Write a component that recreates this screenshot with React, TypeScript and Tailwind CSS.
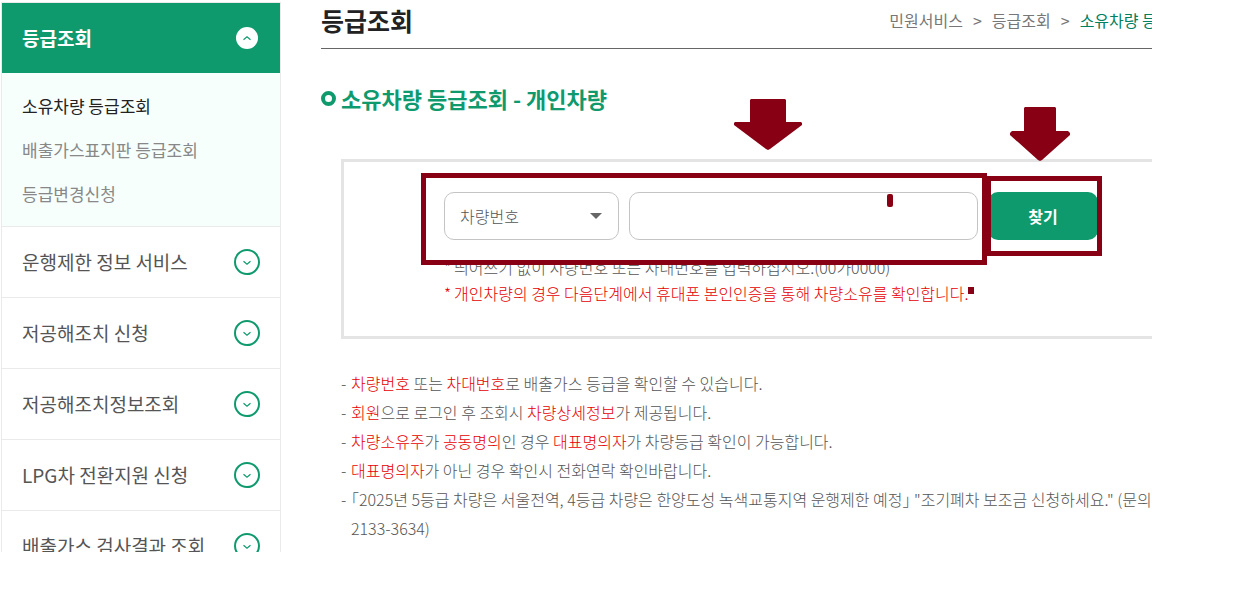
import type { ReactNode } from "react";

const subItems = ["소유차량 등급조회", "배출가스표지판 등급조회", "등급변경신청"];

const menuItems = [
  "운행제한 정보 서비스",
  "저공해조치 신청",
  "저공해조치정보조회",
  "LPG차 전환지원 신청",
  "배출가스 검사결과 조회",
];

function Chevron({ up = false }: { up?: boolean }) {
  return (
    <svg className="size-[26px] shrink-0" viewBox="0 0 26 26" fill="none" aria-hidden="true">
      {up ? (
        <>
          <circle cx="13" cy="13" r="11" fill="#fff" />
          <path d="M9.5 14.7 13 11.7l3.5 3" stroke="#0f9a6e" strokeWidth="1.2" />
        </>
      ) : (
        <>
          <circle cx="13" cy="13" r="12" stroke="#0f9a6e" strokeWidth="2" />
          <path d="M9.5 12.2 13 15.2l3.5-3" stroke="#0f9a6e" strokeWidth="1.2" />
        </>
      )}
    </svg>
  );
}

function Sidebar() {
  return (
    <nav className="w-[280px] shrink-0 border-x border-t border-[#eaeaea]">
      <button className="flex h-[70px] w-full items-center justify-between bg-[#0f9a6e] px-5 text-[19px] font-bold text-white">
        등급조회
        <Chevron up />
      </button>
      <ul className="bg-[#f6fffc] pt-[11px] pb-[10px] pl-5 text-[17px] leading-[44px] text-[#888]">
        {subItems.map((item, i) => (
          <li key={item}>
            <a href="#" className={i === 0 ? "text-[#222]" : ""}>
              {item}
            </a>
          </li>
        ))}
      </ul>
      {menuItems.map((item) => (
        <button
          key={item}
          className="flex h-[71px] w-full items-center justify-between border-t border-[#eaeaea] px-5 text-[19px] text-[#555]"
        >
          {item}
          <Chevron />
        </button>
      ))}
    </nav>
  );
}

function Red({ children }: { children: ReactNode }) {
  return <span className="text-[#e60000]">{children}</span>;
}

function Note({ children }: { children: ReactNode }) {
  return (
    <li className="flex">
      <span className="w-[10px] shrink-0">-</span>
      <span>{children}</span>
    </li>
  );
}

function Annotations() {
  return (
    <div className="pointer-events-none" aria-hidden="true">
      <div className="absolute -top-[16px] left-[542px] h-[80px] w-[116px] border-5 border-[#870014]" />
      <div className="absolute -top-[19px] -left-[23px] h-[92px] w-[566px] border-5 border-[#870014]" />
      <svg className="absolute -top-[93px] left-[290px] h-[52px] w-[68px]" viewBox="0 0 68 52" fill="#870014">
        <path d="M17 0H51L52 1V23H67L68 24V26L36 50 34 51 32 50 0 26V24L1 23H16V1Z" />
      </svg>
      <svg className="absolute -top-[85px] left-[566px] h-[54px] w-[60px]" viewBox="0 0 60 54" fill="#870014">
        <path d="M15 0H45L46 1V24H58L60 26V28L32 53 30 54 28 53 0 28V26L2 24H14V1Z" />
      </svg>
      <div className="absolute top-[2px] left-[443px] h-[13px] w-[6px] rounded-[2px] bg-[#870014]" />
      <div className="absolute top-[95px] left-[524px] h-[7px] w-[6px] bg-[#870014]" />
    </div>
  );
}

function SearchForm() {
  return (
    <form className="mt-[46px] ml-5 flex justify-center border-3 border-[#e4e4e4] pt-[30px] pb-[30px]" onSubmit={(e) => e.preventDefault()}>
      <div className="relative">
        <div className="flex gap-[10px]">
          <div className="relative">
            <select
              aria-label="조회 구분"
              className="h-12 w-[175px] appearance-none rounded-[10px] border border-[#c4c4c4] bg-white px-[15px] text-[16px] font-light text-[#555]"
            >
              <option>차량번호</option>
              <option>차대번호</option>
            </select>
            <svg className="pointer-events-none absolute top-[21px] right-[17px] h-[6px] w-[12px]" viewBox="0 0 12 6" fill="#666" aria-hidden="true">
              <path d="M0 0h12L6 6z" />
            </svg>
          </div>
          <input
            type="text"
            aria-label="번호 입력"
            className="h-12 w-[349px] rounded-[10px] border border-[#c4c4c4] bg-white px-4 text-[16px]"
          />
          <button type="submit" className="h-12 w-[110px] rounded-[10px] bg-[#0f9a6e] text-[16px] font-bold text-white">
            찾기
          </button>
        </div>
        <div className="mt-[14px] text-[16px] leading-[26px] font-light whitespace-nowrap text-[#555]">
          <p className="flex">
            <span className="w-[10px]">*</span>띄어쓰기 없이 차량번호 또는 차대번호를 입력하십시오.(00가0000)
          </p>
          <p className="flex text-[#e60000]">
            <span className="w-[10px]">*</span>개인차량의 경우 다음단계에서 휴대폰 본인인증을 통해 차량소유를 확인합니다.
          </p>
        </div>
        <Annotations />
      </div>
    </form>
  );
}

export default function App() {
  return (
    <div className="bg-white pr-[85px] [font-family:'Noto_Sans_CJK_KR',sans-serif]">
      <div className="flex max-h-[552px] gap-10 overflow-hidden pt-[2px] pl-px">
        <Sidebar />
        <main className="-mr-[49px] min-w-0 flex-1">
          <header className="flex h-[47px] items-center justify-between border-b border-[#666] pb-[10px]">
            <h1 className="text-[25px] leading-none font-bold text-[#222]">등급조회</h1>
            <ol className="flex gap-[10px] text-[16px] leading-none text-[#777]">
              <li>민원서비스</li>
              <li>&gt;</li>
              <li>등급조회</li>
              <li>&gt;</li>
              <li className="text-[#008060]">소유차량 등급조회</li>
            </ol>
          </header>
          <h2 className="mt-[34px] flex items-center gap-[5px] text-[22px] leading-[30px] font-bold text-[#0f9a6e]">
            <span className="size-[15px] rounded-full border-4 border-[#0f9a6e]" />
            소유차량 등급조회 - 개인차량
          </h2>
          <SearchForm />
          <ul className="mt-[30px] ml-5 text-[16px] leading-[29px] font-light text-[#555]">
            <Note>
              <Red>차량번호</Red> 또는 <Red>차대번호</Red>로 배출가스 등급을 확인할 수 있습니다.
            </Note>
            <Note>
              <Red>회원</Red>으로 로그인 후 조회시 <Red>차량상세정보</Red>가 제공됩니다.
            </Note>
            <Note>
              <Red>차량소유주</Red>가 <Red>공동명의</Red>인 경우 <Red>대표명의자</Red>가 차량등급 확인이 가능합니다.
            </Note>
            <Note>
              <Red>대표명의자</Red>가 아닌 경우 확인시 전화연락 확인바랍니다.
            </Note>
            <Note>
              <span className="[font-feature-settings:'halt']">
                「2025년 5등급 차량은 서울전역, 4등급 차량은 한양도성 녹색교통지역 운행제한 예정」 "조기폐차 보조금 신청하세요." (문의 : 02-
                <wbr />
                2133-3634)
              </span>
            </Note>
          </ul>
        </main>
      </div>
    </div>
  );
}
